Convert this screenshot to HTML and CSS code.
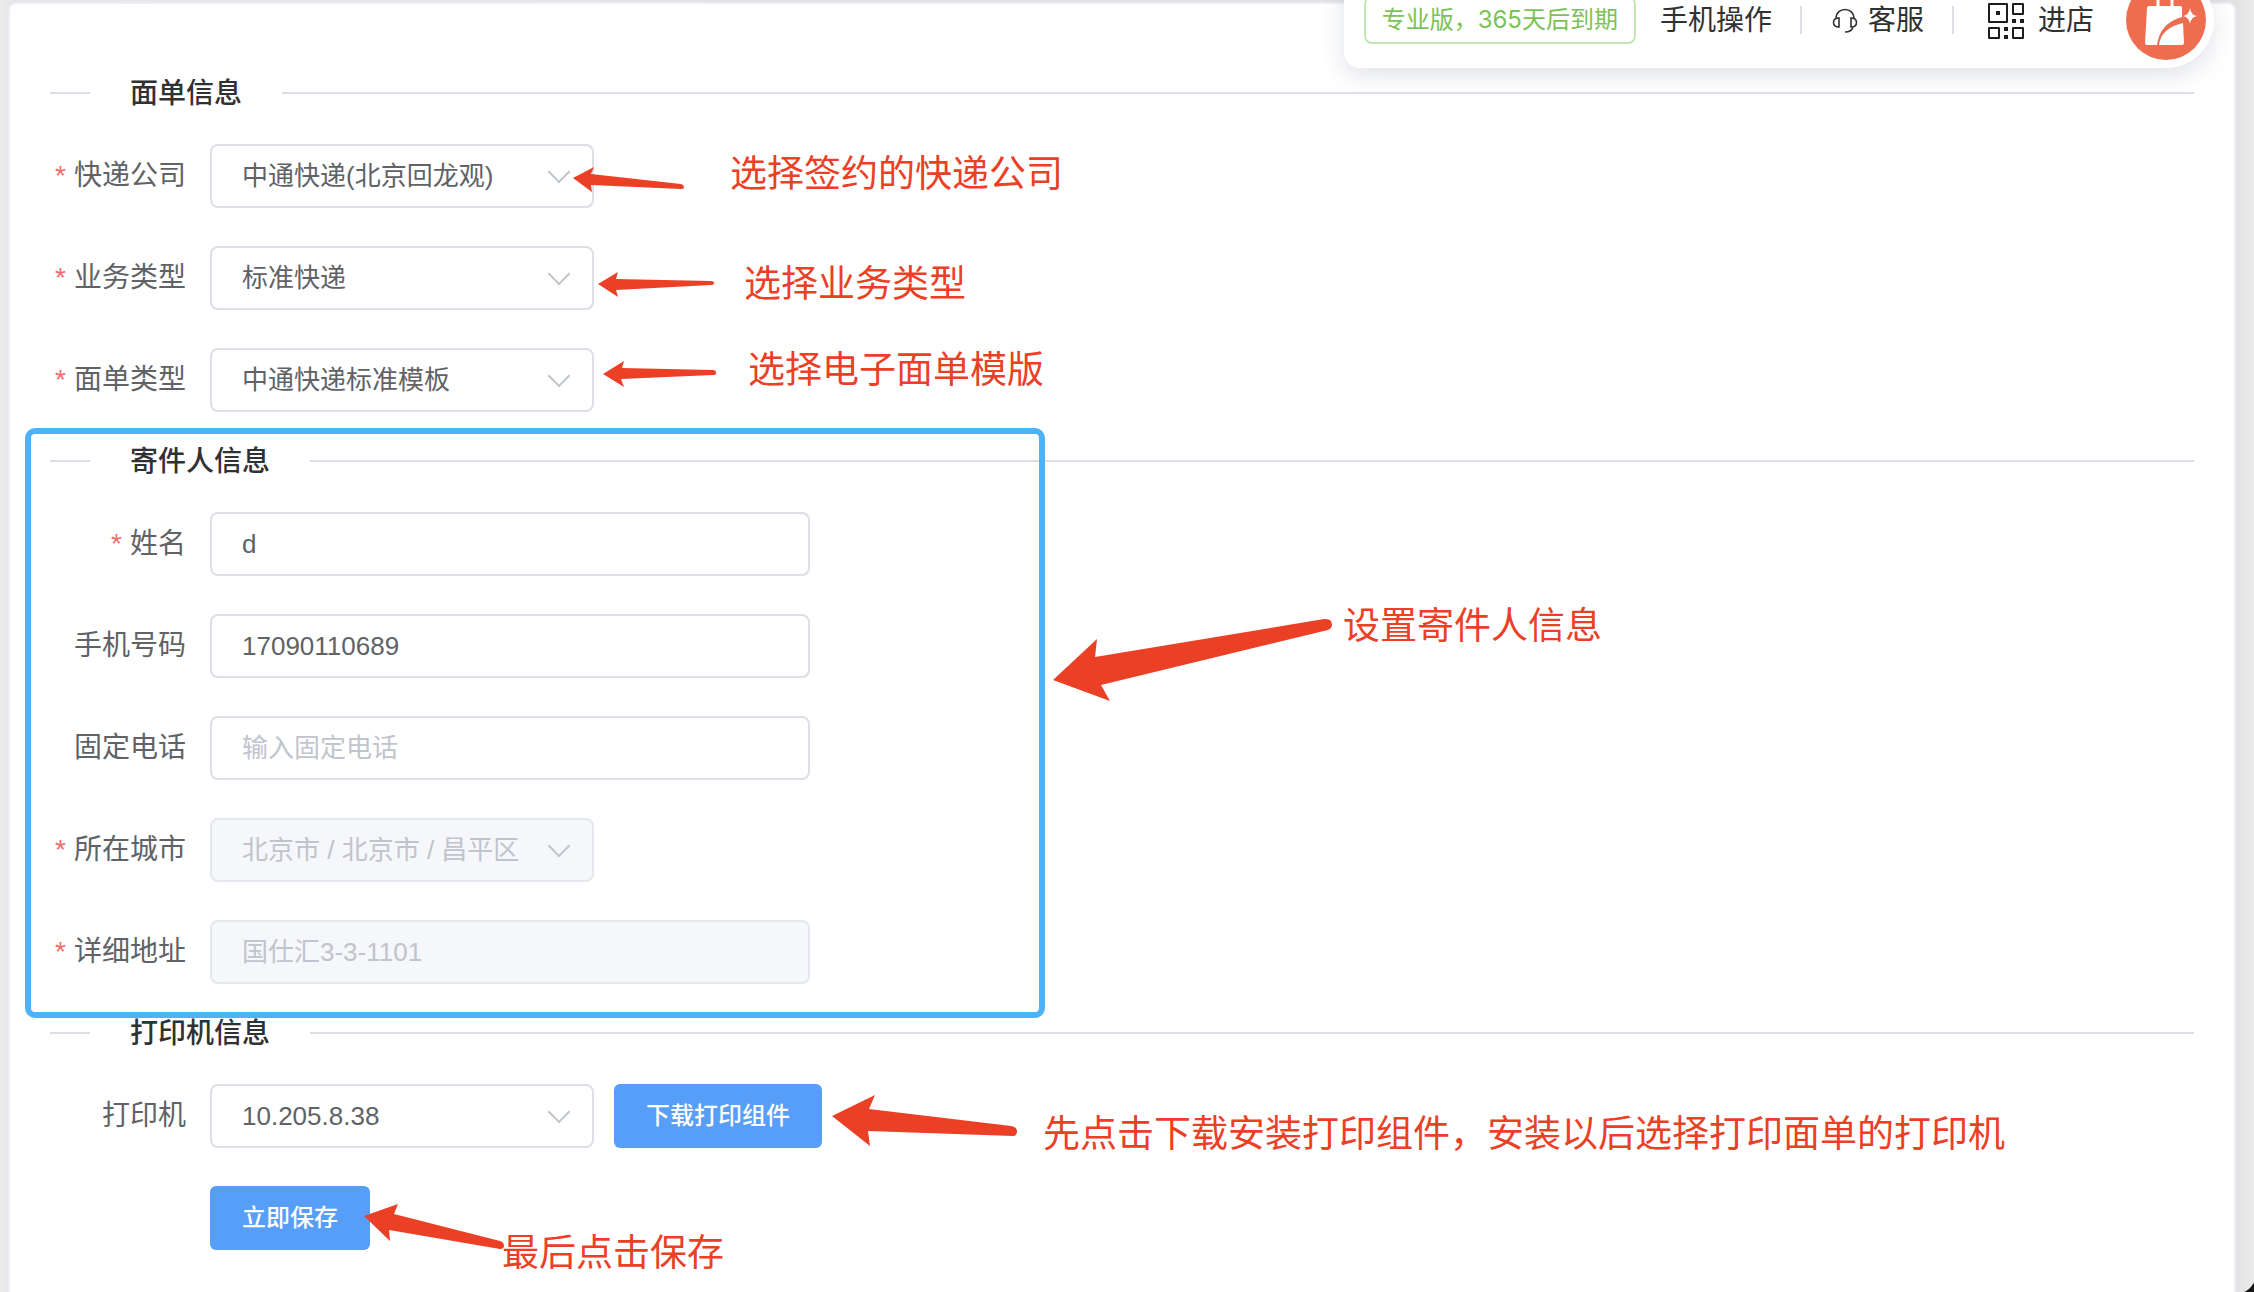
FILE: index.html
```html
<!DOCTYPE html>
<html lang="zh-CN">
<head>
<meta charset="utf-8">
<title>电子面单设置</title>
<link rel="stylesheet" href="styles.css">
</head>
<body>
<header class="topbar">
  <span class="tag">专业版，365天后到期</span>
  <a class="toplink" href="#">手机操作</a>
  <span class="bar"></span>
  <a class="toplink service" href="#">
    <svg width="26" height="26" viewBox="0 0 26 26" fill="none" stroke="#303133" stroke-width="1.600" aria-hidden="true"><path d="M4 10C4 5 8 1.500 13 1.500S22 5 22 10M7 10v9C3.500 19 1.500 17.500 1.500 14.500S3.500 10 7 10zM19 10v9c3.500 0 5.500-1.500 5.500-4.500S22.500 10 19 10zM21 19c-1 3.500-3 5-8 5"/></svg>
    客服
  </a>
  <span class="bar"></span>
  <a class="toplink shop" href="#">
    <svg width="36" height="36" viewBox="0 0 36 36" fill="none" stroke="#1d1d1f" stroke-width="2" stroke-linejoin="round" aria-hidden="true"><path d="M1 1h18v18H1zM25 1h10v10H25zM1 25h10v10H1zM25 25h10v10H25z"/><path fill="#1d1d1f" stroke="none" d="M8 8h4v4H8zM24 16h4v4h-4zM32 16h4v4h-4zM16 24h4v4h-4zM16 32h4v4h-4z"/></svg>
    进店
  </a>
  <a class="avatar" href="#" aria-label="店铺">
    <svg width="80" height="80" viewBox="0 0 80 80" aria-hidden="true"><circle cx="40" cy="40" r="40" fill="#ee6c4f"/><path fill="none" stroke="#fff" stroke-width="3" d="M32 27v-6q0-6 7-6t7 6v6"/><path fill="#fff" d="M23 26h31q2 0 2 2v9q-22 6-25 28H21q-2 0-2-2l2-35q0-2 2-2zM57 43l1 20q0 2-2 2H33q2-17 24-22zM64 28q1 7 7 8-6 1-7 8-1-7-7-8 6-1 7-8z"/></svg>
  </a>
</header>

<main class="card">
  <form>
    <fieldset>
      <legend class="divider"><span>面单信息</span></legend>
      <div class="row"><label class="required" for="company">快递公司</label><div class="select"><select id="company"><option>中通快递(北京回龙观)</option></select></div></div>
      <div class="row"><label class="required" for="business">业务类型</label><div class="select"><select id="business"><option>标准快递</option></select></div></div>
      <div class="row"><label class="required" for="template">面单类型</label><div class="select"><select id="template"><option>中通快递标准模板</option></select></div></div>
    </fieldset>
    <fieldset>
      <legend class="divider"><span>寄件人信息</span></legend>
      <div class="row"><label class="required" for="name">姓名</label><input id="name" type="text" value="d"></div>
      <div class="row"><label for="mobile">手机号码</label><input id="mobile" type="tel" value="17090110689"></div>
      <div class="row"><label for="phone">固定电话</label><input id="phone" type="tel" placeholder="输入固定电话"></div>
      <div class="row"><label class="required" for="city">所在城市</label><div class="select"><select id="city" disabled><option>北京市 / 北京市 / 昌平区</option></select></div></div>
      <div class="row"><label class="required" for="address">详细地址</label><input id="address" type="text" value="国仕汇3-3-1101" disabled></div>
    </fieldset>
    <fieldset>
      <legend class="divider"><span>打印机信息</span></legend>
      <div class="row"><label for="printer">打印机</label><div class="select"><select id="printer"><option>10.205.8.38</option></select></div><button class="download" type="button">下载打印组件</button></div>
      <div class="row actions"><button type="submit">立即保存</button></div>
    </fieldset>
  </form>
</main>

<div class="marks">
  <div class="frame"></div>
  <svg class="arrows" width="1400" height="1292" viewBox="0 0 1400 1292" fill="#eb4026" aria-hidden="true">
    <path d="M573 178L594 167L591 174L681 184Q684 185 684 187Q684 189 681 189L591 185L592 192Z"/>
    <path d="M598 284L618 272L616 279L711 281Q714 281 714 283Q714 285 711 285L616 290L618 297Z"/>
    <path d="M603 374L624 361L622 368L713 370Q716 370 716 373Q716 375 713 375L621 379L624 387Z"/>
    <path d="M1053 680L1097 639L1095 657L1324 619Q1332 618 1332 625Q1332 628 1328 630L1101 685L1110 701Z"/>
    <path d="M832 1116L875 1095L869 1109L1011 1126Q1017 1127 1017 1131Q1017 1136 1013 1136L868 1131L870 1146Z"/>
    <path d="M364 1216L398 1204L394 1214L500 1241Q504 1242 504 1246Q504 1249 500 1249L389 1230L390 1241Z"/>
  </svg>
  <p class="note note-company">选择签约的快递公司</p>
  <p class="note note-business">选择业务类型</p>
  <p class="note note-template">选择电子面单模版</p>
  <p class="note note-sender">设置寄件人信息</p>
  <p class="note note-printer">先点击下载安装打印组件，安装以后选择打印面单的打印机</p>
  <p class="note note-save">最后点击保存</p>
  <div class="corner"></div>
</div>
</body>
</html>
```
FILE: styles.css
```css
* { box-sizing: border-box; }

body {
  position: relative;
  margin: 0;
  padding: 2px 18px 0 8px;
  min-height: 100vh;
  display: flex;
  flex-direction: column;
  overflow: hidden;
  background: linear-gradient(to left, #ebebeb, #e2e2e2 18px, #e6e6e6 calc(100% - 10px), #ececec);
  color: #606266;
  font: 28px/40px "Liberation Sans", "Noto Sans CJK SC", sans-serif;
}

.card {
  flex: 1;
  padding: 78px 40px 0;
  background: #fff;
  border: 2px solid #ebeef5;
  border-bottom: 0;
  border-radius: 8px 8px 0 0;
}

fieldset { margin: 0; padding: 0; border: 0; min-width: 0; }

.divider {
  display: flex;
  align-items: center;
  gap: 40px;
  width: 100%;
  height: 22px;
  margin-bottom: 40px;
  padding: 0;
  color: #303133;
  font-weight: 500;
}
.divider span { padding-top: 2px; }
.divider::before, .divider::after { content: ""; height: 2px; background: #dcdfe6; }
.divider::before { width: 40px; }
.divider::after { flex: 1; }

.row { display: flex; align-items: center; height: 64px; margin-bottom: 38px; }

label { width: 160px; padding-right: 24px; text-align: right; }
.required::before { content: "*"; margin-right: 8px; color: #f56c6c; }

input, select {
  height: 64px;
  padding: 0 30px;
  background: #fff;
  border: 2px solid #dcdfe6;
  border-radius: 8px;
  color: #606266;
  font: inherit;
  font-size: 26px;
  line-height: 60px;
  opacity: 1;
}
input { width: 600px; }
select { width: 100%; appearance: none; }
input::placeholder { color: #c0c4cc; opacity: 1; }
input:disabled, select:disabled { background: #f5f7fa; border-color: #e4e7ed; color: #c0c4cc; opacity: 1; }
input:disabled { padding-bottom: 6px; line-height: 54px; }

.select { position: relative; width: 384px; }
.select::after {
  content: "";
  position: absolute;
  top: 20px;
  right: 27px;
  width: 14px;
  height: 14px;
  border: solid #c0c4cc;
  border-width: 0 2px 2px 0;
  transform: rotate(45deg);
  pointer-events: none;
}

button {
  height: 64px;
  padding: 0 32px;
  border: 0;
  border-radius: 6px;
  background: #579ef8;
  color: #fff;
  font: inherit;
  font-size: 24px;
  font-weight: 500;
}
.download { margin-left: 20px; }
.actions { padding-left: 160px; }

/* Floating account bar, partly scrolled off the top */
.topbar {
  position: absolute;
  z-index: 2;
  top: -28px;
  right: 40px;
  display: flex;
  align-items: center;
  height: 96px;
  padding: 0 8px 0 20px;
  background: #fff;
  border-radius: 16px 48px 48px 16px;
  box-shadow: 0 8px 24px rgba(40, 60, 90, .14);
}
.tag {
  height: 48px;
  padding: 0 16px;
  border: 2px solid #c2e7b0;
  border-radius: 8px;
  color: #7bc257;
  font-family: Inter, "Noto Sans CJK SC", sans-serif;
  font-size: 24px;
  line-height: 44px;
  margin-right: 24px;
}
.toplink { display: flex; align-items: center; padding-top: 2px; color: #303133; text-decoration: none; }
.bar { width: 2px; height: 28px; margin: 0 28px; background: #dcdfe6; }
.service { gap: 10px; padding-left: 2px; }
.shop { gap: 14px; padding-left: 6px; }
.avatar { height: 80px; margin-left: 32px; }

/* Annotations over the form */
.marks { position: absolute; z-index: 3; inset: 0; pointer-events: none; }
.frame {
  position: absolute;
  left: 25px;
  top: 428px;
  width: 1020px;
  height: 590px;
  border: 6px solid #4db3f9;
  border-radius: 10px;
}
.arrows { position: absolute; left: 0; top: 0; }
.note {
  position: absolute;
  margin: 0;
  color: #eb4026;
  font-size: 37px;
  line-height: 48px;
  white-space: nowrap;
}
.note-company { left: 730px; top: 151px; }
.note-business { left: 744px; top: 261px; }
.note-template { left: 748px; top: 347px; }
.note-sender { left: 1343px; top: 603px; }
.note-printer { left: 1043px; top: 1111px; }
.note-save { left: 502px; top: 1230px; }
.corner {
  position: absolute;
  right: 0;
  bottom: 0;
  width: 20px;
  height: 20px;
  background: radial-gradient(circle at 0 0, transparent 22px, #161616 23px);
}
```
